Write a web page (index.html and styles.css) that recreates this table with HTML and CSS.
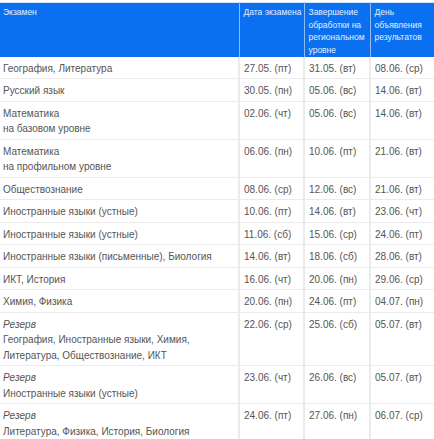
FILE: index.html
```html
<!DOCTYPE html>
<html>
<head>
    <link rel="stylesheet" href="styles.css">
</head>
<body>
    <table class="schedule">
        <thead>
            <tr>
                <th class="col-exam">Экзамен</th>
                <th class="col-date">Дата экзамена</th>
                <th class="col-check">Завершение<br>обработки на<br>региональном<br>уровне</th>
                <th class="col-result">День<br>объявления<br>результатов</th>
            </tr>
        </thead>
        <tbody>
            <tr><td>География, Литература</td><td>27.05. (пт)</td><td>31.05. (вт)</td><td>08.06. (ср)</td></tr>
            <tr><td>Русский язык</td><td>30.05. (пн)</td><td>05.06. (вс)</td><td>14.06. (вт)</td></tr>
            <tr><td>Математика<br>на базовом уровне</td><td>02.06. (чт)</td><td>05.06. (вс)</td><td>14.06. (вт)</td></tr>
            <tr><td>Математика<br>на профильном уровне</td><td>06.06. (пн)</td><td>10.06. (пт)</td><td>21.06. (вт)</td></tr>
            <tr><td>Обществознание</td><td>08.06. (ср)</td><td>12.06. (вс)</td><td>21.06. (вт)</td></tr>
            <tr><td>Иностранные языки (устные)</td><td>10.06. (пт)</td><td>14.06. (вт)</td><td>23.06. (чт)</td></tr>
            <tr><td>Иностранные языки (устные)</td><td>11.06. (сб)</td><td>15.06. (ср)</td><td>24.06. (пт)</td></tr>
            <tr><td>Иностранные языки (письменные), Биология</td><td>14.06. (вт)</td><td>18.06. (сб)</td><td>28.06. (вт)</td></tr>
            <tr><td>ИКТ, История</td><td>16.06. (чт)</td><td>20.06. (пн)</td><td>29.06. (ср)</td></tr>
            <tr><td>Химия, Физика</td><td>20.06. (пн)</td><td>24.06. (пт)</td><td>04.07. (пн)</td></tr>
            <tr><td><em>Резерв</em><br>География, Иностранные языки, Химия,<br>Литература, Обществознание, ИКТ</td><td>22.06. (ср)</td><td>25.06. (сб)</td><td>05.07. (вт)</td></tr>
            <tr><td><em>Резерв</em><br>Иностранные языки (устные)</td><td>23.06. (чт)</td><td>26.06. (вс)</td><td>05.07. (вт)</td></tr>
            <tr><td><em>Резерв</em><br>Литература, Физика, История, Биология</td><td>24.06. (пт)</td><td>27.06. (пн)</td><td>06.07. (ср)</td></tr>
        </tbody>
    </table>
</body>
</html>
```

FILE: styles.css
```css
body {
    margin: 0;
    padding-top: 2px;
    background-color: white;
    font-family: "Liberation Sans", Arial, sans-serif;
}
.schedule {
    width: 434px;
    border-collapse: collapse;
    table-layout: fixed;
    border-top: 1px solid #d6e6fb;
}
.schedule th,
.schedule td {
    box-sizing: border-box;
}
.col-exam {
    width: 239px;
}
.col-date {
    width: 65px;
}
.col-check {
    width: 66px;
}
.col-result {
    width: 64px;
}
.schedule th {
    background-color: #0a70f0;
    color: #e3efff;
    font-size: 8.5px;
    font-weight: normal;
    line-height: 12.5px;
    text-align: left;
    vertical-align: top;
    padding: 3px 2px 0 4px;
    height: 54px;
    white-space: nowrap;
    border-left: 1px solid #8ebcf7;
}
.schedule th:first-child {
    border-left: none;
    padding-left: 3px;
}
.schedule td {
    color: #555;
    font-size: 10px;
    line-height: 15.5px;
    vertical-align: top;
    padding: 4px 2px 2px 4px;
    border-bottom: 1px solid #ebebeb;
    border-left: 2px solid #ebebeb;
    white-space: nowrap;
}
.schedule td:first-child {
    border-left: none;
    padding-left: 3px;
}
.schedule em {
    font-style: italic;
}
```
